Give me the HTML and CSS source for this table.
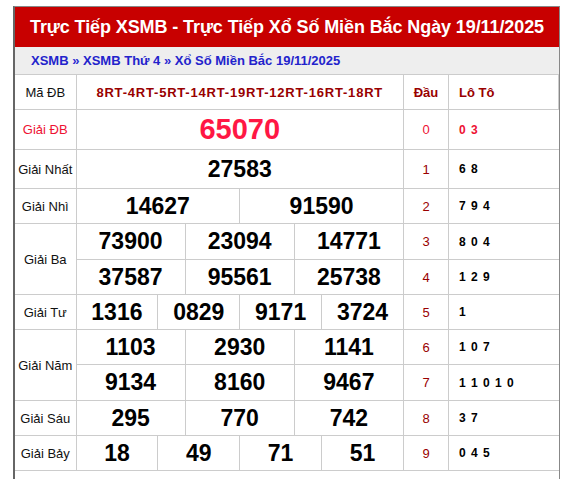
FILE: index.html
```html
<!DOCTYPE html>
<html lang="vi">
<head>
<meta charset="utf-8">
<link rel="stylesheet" href="styles.css">
</head>
<body>
<div class="box">
  <h1 class="title">Trực Tiếp XSMB - Trực Tiếp Xổ Số Miền Bắc Ngày 19/11/2025</h1>
  <div class="crumb"><a>XSMB</a> » <a>XSMB Thứ 4</a> » <a>Xổ Số Miền Bắc 19/11/2025</a></div>
  <table class="kq">
    <colgroup>
      <col class="c-lbl">
      <col class="c-n"><col class="c-n"><col class="c-n"><col class="c-n"><col class="c-n"><col class="c-n">
      <col class="c-n"><col class="c-n"><col class="c-n"><col class="c-n"><col class="c-n"><col class="c-n">
      <col class="c-dau">
      <col class="c-lt">
    </colgroup>
    <tr class="r-head">
      <td class="lbl">Mã ĐB</td>
      <td colspan="12" class="code">8RT-4RT-5RT-14RT-19RT-12RT-16RT-18RT</td>
      <td class="dau-h">Đầu</td>
      <td class="lt-h">Lô Tô</td>
    </tr>
    <tr class="r-db">
      <td class="lbl red">Giải ĐB</td>
      <td colspan="12" class="num db">65070</td>
      <td class="dau red">0</td>
      <td class="lt red">0 3</td>
    </tr>
    <tr class="r-nhat">
      <td class="lbl">Giải Nhất</td>
      <td colspan="12" class="num">27583</td>
      <td class="dau">1</td>
      <td class="lt">6 8</td>
    </tr>
    <tr>
      <td class="lbl">Giải Nhì</td>
      <td colspan="6" class="num">14627</td>
      <td colspan="6" class="num">91590</td>
      <td class="dau">2</td>
      <td class="lt">7 9 4</td>
    </tr>
    <tr class="r-tall">
      <td class="lbl" rowspan="2">Giải Ba</td>
      <td colspan="4" class="num">73900</td>
      <td colspan="4" class="num">23094</td>
      <td colspan="4" class="num">14771</td>
      <td class="dau">3</td>
      <td class="lt">8 0 4</td>
    </tr>
    <tr>
      <td colspan="4" class="num">37587</td>
      <td colspan="4" class="num">95561</td>
      <td colspan="4" class="num">25738</td>
      <td class="dau">4</td>
      <td class="lt">1 2 9</td>
    </tr>
    <tr>
      <td class="lbl">Giải Tư</td>
      <td colspan="3" class="num">1316</td>
      <td colspan="3" class="num">0829</td>
      <td colspan="3" class="num">9171</td>
      <td colspan="3" class="num">3724</td>
      <td class="dau">5</td>
      <td class="lt">1</td>
    </tr>
    <tr>
      <td class="lbl" rowspan="2">Giải Năm</td>
      <td colspan="4" class="num">1103</td>
      <td colspan="4" class="num">2930</td>
      <td colspan="4" class="num">1141</td>
      <td class="dau">6</td>
      <td class="lt">1 0 7</td>
    </tr>
    <tr class="r-tall">
      <td colspan="4" class="num">9134</td>
      <td colspan="4" class="num">8160</td>
      <td colspan="4" class="num">9467</td>
      <td class="dau">7</td>
      <td class="lt">1 1 0 1 0</td>
    </tr>
    <tr>
      <td class="lbl">Giải Sáu</td>
      <td colspan="4" class="num">295</td>
      <td colspan="4" class="num">770</td>
      <td colspan="4" class="num">742</td>
      <td class="dau">8</td>
      <td class="lt">3 7</td>
    </tr>
    <tr>
      <td class="lbl">Giải Bảy</td>
      <td colspan="3" class="num">18</td>
      <td colspan="3" class="num">49</td>
      <td colspan="3" class="num">71</td>
      <td colspan="3" class="num">51</td>
      <td class="dau">9</td>
      <td class="lt">0 4 5</td>
    </tr>
  </table>
  <div class="foot"></div>
</div>
</body>
</html>
```

FILE: styles.css
```css
html, body {
  margin: 0;
  padding: 0;
  background: #fff;
}
body {
  font-family: "Liberation Sans", Arial, sans-serif;
  padding-top: 6px;
}
.box {
  margin-left: 13px;
  width: 547px;
  border: 1px solid #888;
  border-left: 2px solid #666;
  border-bottom: none;
  box-sizing: border-box;
}
.title {
  margin: 0;
  background: #c80000;
  color: #fff;
  font-size: 18px;
  font-weight: bold;
  letter-spacing: -0.1px;
  text-align: center;
  height: 40px;
  line-height: 40px;
  white-space: nowrap;
}
.crumb {
  background: #eeeeee;
  height: 28px;
  line-height: 27px;
  padding-left: 16px;
  font-size: 13px;
  font-weight: bold;
  color: #2a2ad2;
  border-bottom: 1px solid #ccc;
  box-sizing: border-box;
}
.crumb a {
  color: #2323cc;
}
.kq {
  width: 100%;
  border-collapse: collapse;
  table-layout: fixed;
}
.c-lbl { width: 61px; }
.c-dau { width: 45px; }
.c-lt { width: 110px; }
.kq td {
  border: 1px solid #ccc;
  padding: 0;
  height: 34px;
  text-align: center;
  vertical-align: middle;
}
.kq tr > td:first-child.lbl { border-left: none; }
.kq tr > td.lt { border-right: none; }
.kq tr.r-head td { border-top: none; height: 34px; }
.kq tr.r-db td { height: 39px; }
.kq tr.r-nhat td { height: 38px; }
.kq tr.r-tall td { height: 35px; }
.lbl {
  font-size: 13px;
  color: #111;
}
.red { color: #ee1133 !important; }
.code {
  font-size: 13px;
  font-weight: bold;
  color: #990000;
  letter-spacing: 0.8px;
}
.dau-h {
  font-size: 13px;
  font-weight: bold;
  color: #990000;
}
.lt-h {
  text-align: left !important;
  padding-left: 10px !important;
  font-size: 13px;
  font-weight: bold;
  color: #990000;
}
.num {
  font-size: 23px;
  font-weight: bold;
  color: #000;
}
.num.db {
  font-size: 29px;
  color: #ff1744;
}
.dau {
  font-size: 13px;
  color: #990000;
}
.lt {
  text-align: left !important;
  padding-left: 10px !important;
  font-size: 12px;
  font-weight: bold;
  color: #000;
  letter-spacing: 1px;
}
.foot {
  height: 20px;
}
```
